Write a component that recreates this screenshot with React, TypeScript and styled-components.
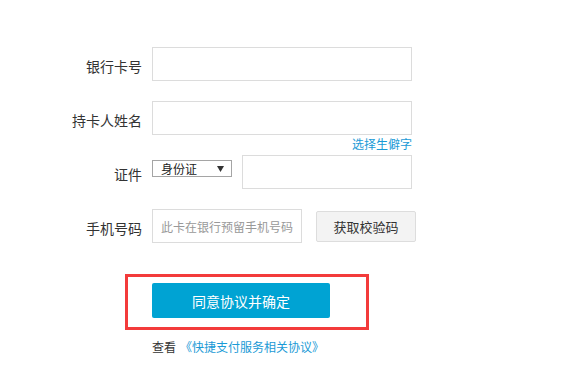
import { createGlobalStyle } from "styled-components";
import styled from "styled-components";

const GlobalStyle = createGlobalStyle`
  html, body {
    margin: 0;
    padding: 0;
    background: #fff;
  }
  body {
    font-family: "Noto Sans CJK SC", "Noto Sans", sans-serif;
    color: #333;
  }
`;

const Page = styled.div`
  width: 564px;
  height: 382px;
  padding-top: 47px;
  box-sizing: border-box;
`;

const Row = styled.div<{ $top?: number }>`
  display: flex;
  align-items: center;
  gap: 10px;
  height: 34px;
  margin-top: ${(p) => p.$top ?? 0}px;
`;

const Label = styled.label`
  width: 142px;
  text-align: right;
  font-size: 14px;
  line-height: 20px;
  margin-top: 4px;
  color: #333;
`;

const Input = styled.input<{ $width: number }>`
  box-sizing: border-box;
  width: ${(p) => p.$width}px;
  height: 34px;
  border: 1px solid #dcdcdc;
  padding: 0 8px;
  font-family: inherit;
  font-size: 12px;
  color: #333;
  outline: none;
  background: #fff;

  &::placeholder {
    color: #999;
  }
`;

const Hint = styled.div`
  width: 412px;
  height: 18px;
  margin-bottom: 2px;
  text-align: right;
  font-size: 12px;
  line-height: 18px;
`;

const Link = styled.a`
  color: #1a9ad6;
  text-decoration: none;
  cursor: pointer;
`;

const SelectBox = styled.div`
  box-sizing: border-box;
  width: 80px;
  height: 17px;
  margin-bottom: 7px;
  border: 1px solid #a5a5a5;
  background: #fff;
  display: flex;
  align-items: center;
  justify-content: space-between;
  padding: 0 7px 0 8px;
  font-size: 12px;
  line-height: 15px;
  color: #222;
`;

const Arrow = styled.svg`
  width: 7px;
  height: 7px;
  fill: #333;
`;

const CodeButton = styled.button`
  box-sizing: border-box;
  width: 100px;
  height: 31px;
  margin-left: 4px;
  border: 1px solid #ddd;
  border-radius: 2px;
  background: #f3f3f3;
  font-family: inherit;
  font-size: 13px;
  color: #333;
  cursor: pointer;
`;

const Highlight = styled.div`
  box-sizing: border-box;
  width: 244px;
  height: 56px;
  margin: 31px 0 0 125px;
  padding: 6px 0 0 24px;
  border: 3px solid #f33b3b;
`;

const SubmitButton = styled.button`
  width: 178px;
  height: 35px;
  border: none;
  border-radius: 2px;
  background: #00a3d3;
  color: #fff;
  font-family: inherit;
  font-size: 14px;
  cursor: pointer;
`;

const Footer = styled.div`
  margin-top: 8px;
  padding-left: 152px;
  font-size: 12px;
  line-height: 18px;
  color: #333;

  ${Link} {
    margin-left: 4px;
  }
`;

export default function App() {
  return (
    <>
      <GlobalStyle />
      <Page>
        <Row>
          <Label>银行卡号</Label>
          <Input $width={260} />
        </Row>
        <Row $top={20}>
          <Label>持卡人姓名</Label>
          <Input $width={260} />
        </Row>
        <Hint>
          <Link>选择生僻字</Link>
        </Hint>
        <Row>
          <Label>证件</Label>
          <SelectBox>
            <span>身份证</span>
            <Arrow viewBox="0 0 8 8">
              <path d="M0 1h8L4 8z" />
            </Arrow>
          </SelectBox>
          <Input $width={170} />
        </Row>
        <Row $top={20}>
          <Label>手机号码</Label>
          <Input $width={150} placeholder="此卡在银行预留手机号码" />
          <CodeButton>获取校验码</CodeButton>
        </Row>
        <Highlight>
          <SubmitButton>同意协议并确定</SubmitButton>
        </Highlight>
        <Footer>
          查看<Link>《快捷支付服务相关协议》</Link>
        </Footer>
      </Page>
    </>
  );
}
